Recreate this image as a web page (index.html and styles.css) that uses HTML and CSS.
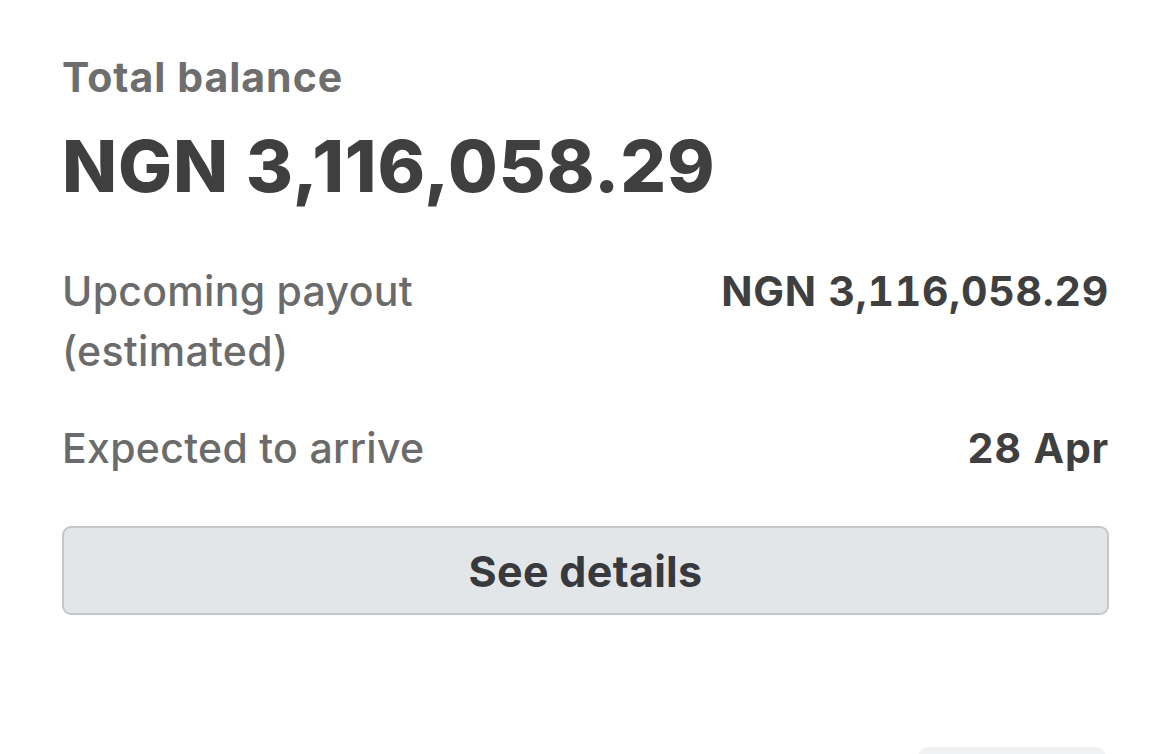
FILE: index.html
```html
<!DOCTYPE html>
<html lang="en">
<head>
    <meta charset="UTF-8">
    <meta name="viewport" content="width=device-width, initial-scale=1.0">
    <title>Balance</title>
    <link rel="stylesheet" href="styles.css">
</head>
<body>

<div class="balance-card">
    <div class="balance-title">Total balance</div>
    <div class="balance-amount">NGN 3,116,058.29</div>

    <div class="info-row">
        <div class="info-label">Upcoming payout<br>(estimated)</div>
        <div class="info-value">NGN 3,116,058.29</div>
    </div>
    <div class="info-row">
        <div class="info-label">Expected to arrive</div>
        <div class="info-value">28 Apr</div>
    </div>

    <button class="details-button">See details</button>

    <div class="more-row">
        <div class="more-pill"></div>
    </div>
</div>

</body>
</html>
```

FILE: styles.css
```css
body {
    margin: 0;
    padding: 0;
    background-color: #ffffff;
    font-family: Inter, "Noto Sans", sans-serif;
}

.balance-card {
    padding: 52px 61px 0 62px;
}

.balance-title {
    font-size: 41px;
    font-weight: 700;
    color: #6e6e6e;
    line-height: 50px;
    letter-spacing: 1px;
}

.balance-amount {
    font-size: 72px;
    font-weight: 800;
    color: #3f3f3f;
    line-height: 88px;
    letter-spacing: 0.9px;
    margin-top: 20px;
    margin-bottom: 51px;
}

.info-row {
    display: flex;
    justify-content: space-between;
    align-items: flex-start;
    margin-bottom: 37px;
}

.info-label {
    font-size: 41px;
    font-weight: 500;
    color: #6b6b6b;
    line-height: 60px;
    letter-spacing: 0.3px;
}

.info-value {
    font-size: 41px;
    font-weight: 700;
    color: #3f3f3f;
    line-height: 60px;
    letter-spacing: 0.75px;
    font-variant-numeric: tabular-nums;
}

/* Full-width secondary button (margin collapses with the row above) */
.details-button {
    display: block;
    width: 100%;
    height: 89px;
    margin-top: 48px;
    background-color: #e3e6e9;
    border: 2px solid #c6c7ca;
    border-radius: 9px;
    font-family: inherit;
    font-size: 43px;
    font-weight: 700;
    color: #38393c;
    letter-spacing: 0.3px;
}

.more-row {
    display: flex;
    justify-content: flex-end;
    margin-top: 132px;
}

.more-pill {
    width: 188px;
    height: 40px;
    margin-right: 3px;
    background-color: #f1f2f4;
    border-radius: 10px;
}
```
